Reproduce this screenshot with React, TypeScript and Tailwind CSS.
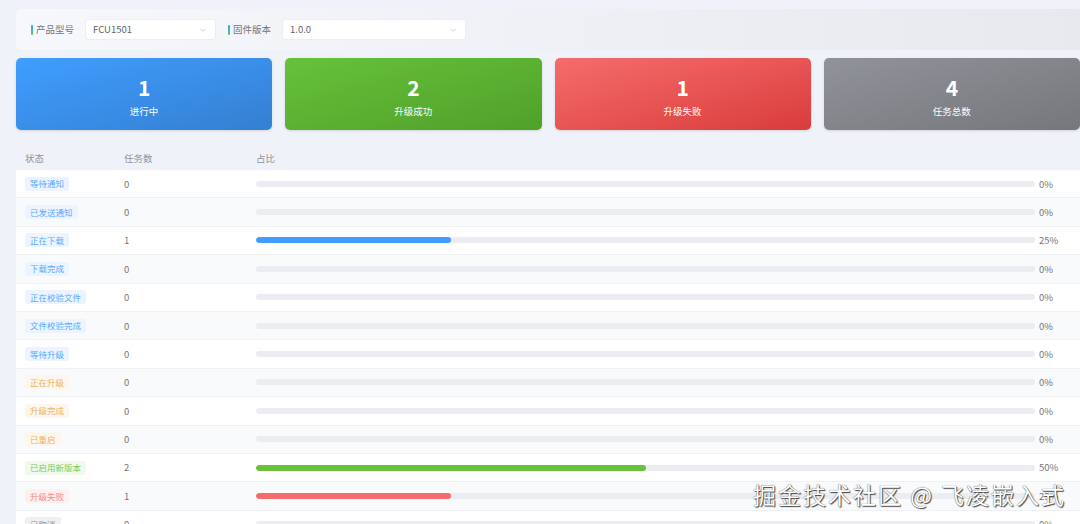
import React from 'react';

type Tone = 'blue' | 'orange' | 'green' | 'red' | 'gray';

interface StatusRow {
    label: string;
    count: number;
    tone: Tone;
}

const rows: StatusRow[] = [
    { label: '等待通知', count: 0, tone: 'blue' },
    { label: '已发送通知', count: 0, tone: 'blue' },
    { label: '正在下载', count: 1, tone: 'blue' },
    { label: '下载完成', count: 0, tone: 'blue' },
    { label: '正在校验文件', count: 0, tone: 'blue' },
    { label: '文件校验完成', count: 0, tone: 'blue' },
    { label: '等待升级', count: 0, tone: 'blue' },
    { label: '正在升级', count: 0, tone: 'orange' },
    { label: '升级完成', count: 0, tone: 'orange' },
    { label: '已重启', count: 0, tone: 'orange' },
    { label: '已启用新版本', count: 2, tone: 'green' },
    { label: '升级失败', count: 1, tone: 'red' },
    { label: '已取消', count: 0, tone: 'gray' },
];

const TOTAL = 4;

const tagClass: Record<Tone, string> = {
    blue: 'bg-[#ecf5ff] text-[#5aa9ff]',
    orange: 'bg-[#fdf6ec] text-[#ebb563]',
    green: 'bg-[#f0f9eb] text-[#7ecb58]',
    red: 'bg-[#fef0f0] text-[#f78989]',
    gray: 'bg-[#f0f0f2] text-[#909399]',
};

const barClass: Record<Tone, string> = {
    blue: 'bg-[#409eff]',
    orange: 'bg-[#e6a23c]',
    green: 'bg-[#67c23a]',
    red: 'bg-[#f56c6c]',
    gray: 'bg-[#909399]',
};

const stats = [
    { value: 1, label: '进行中', cls: 'bg-gradient-to-br from-[#409eff] to-[#347fd1]' },
    { value: 2, label: '升级成功', cls: 'bg-gradient-to-br from-[#67c23a] to-[#50a02a]' },
    { value: 1, label: '升级失败', cls: 'bg-gradient-to-br from-[#f56c6c] to-[#d93b3b]' },
    { value: 4, label: '任务总数', cls: 'bg-gradient-to-br from-[#909399] to-[#75777c]' },
];

const Chevron = () => (
    <svg width="8" height="8" viewBox="0 0 10 10" fill="none" stroke="#c0c4cc" strokeWidth="1">
        <path d="M2 3.5 L5 6.5 L8 3.5" />
    </svg>
);

const FilterSelect: React.FC<{ label: string; value: string; width: string }> = ({ label, value, width }) => (
    <div className="flex items-center">
        <span className="w-[2px] h-[10px] rounded-sm bg-gradient-to-b from-[#409eff] to-[#67c23a]" />
        <span className="ml-[3px] text-[9.5px] text-[#73767c]">{label}</span>
        <div className={`ml-[11px] h-[21px] ${width} bg-white rounded-[3px] border border-[#eceef3] flex items-center justify-between pl-[7px] pr-[8px]`}>
            <span className="text-[9.5px] text-[#606266]">{value}</span>
            <Chevron />
        </div>
    </div>
);

const App: React.FC = () => {
    return (
        <div className="relative w-[1080px] h-[524px] overflow-hidden bg-[#f0f2f9] font-['Noto_Sans_CJK_SC','Noto_Sans',sans-serif]">
            <div className="pl-4 pt-[9px]">
                {/* Filters */}
                <div className="h-[41px] rounded-l-md bg-gradient-to-r from-[#f7f8fc] to-[#e7e9ee] flex items-center gap-[12px] pl-[15px]">
                    <FilterSelect label="产品型号" value="FCU1501" width="w-[131px]" />
                    <FilterSelect label="固件版本" value="1.0.0" width="w-[184px]" />
                </div>

                {/* Stat cards */}
                <div className="mt-[8px] grid grid-cols-4 gap-[13px]">
                    {stats.map((s) => (
                        <div key={s.label} className={`h-[72px] rounded-[5px] ${s.cls} flex flex-col items-center text-white shadow-sm`}>
                            <span className="mt-[15px] text-[21px] font-bold leading-[28px]">{s.value}</span>
                            <span className="mt-[4px] text-[9.5px] leading-[12px]">{s.label}</span>
                        </div>
                    ))}
                </div>

                {/* Table */}
                <div className="mt-[16px]">
                    <div className="h-[24px] flex items-center text-[9.5px] text-[#909399]">
                        <span className="w-[108px] pl-[9px]">状态</span>
                        <span className="w-[132px]">任务数</span>
                        <span>占比</span>
                    </div>
                    {rows.map((r, i) => {
                        const pct = Math.round((r.count / TOTAL) * 100);
                        return (
                            <div
                                key={r.label}
                                className={`h-[28.4px] flex items-center border-b border-[#f0f1f5] ${i % 2 === 0 ? 'bg-white' : 'bg-[#f9fafc]'}`}
                            >
                                <div className="w-[108px] pl-[9px] flex items-center">
                                    <span className={`h-[14px] flex items-center px-[5px] rounded-[3px] text-[8.5px] ${tagClass[r.tone]}`}>
                                        {r.label}
                                    </span>
                                </div>
                                <span className="w-[132px] text-[9.5px] text-[#73767c]">{r.count}</span>
                                <div className="w-[779px] h-[6px] rounded-full bg-[#ebedf3] overflow-hidden">
                                    <div className={`h-full rounded-full ${barClass[r.tone]}`} style={{ width: `${pct}%` }} />
                                </div>
                                <span className="ml-[4px] text-[9.5px] text-[#73767c]">{pct}%</span>
                            </div>
                        );
                    })}
                </div>
            </div>

            {/* watermark */}
            <div className="absolute left-[753px] top-[477px] text-[23px] tracking-[2px] text-white font-['Noto_Sans_CJK_SC',sans-serif] [text-shadow:0_0_1px_#333,1px_1px_1px_#444]">
                掘金技术社区 @ 飞凌嵌入式
            </div>
        </div>
    );
};

export default App;
